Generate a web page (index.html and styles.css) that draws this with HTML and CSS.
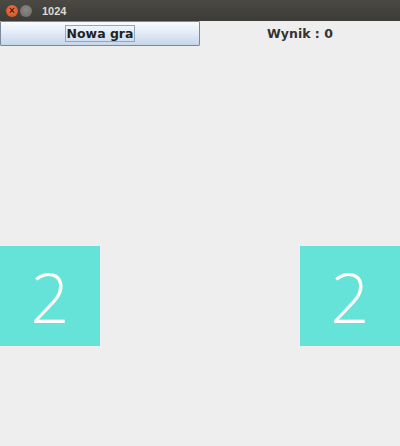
FILE: index.html
```html
<!DOCTYPE html>
<html>
<head>
<meta charset="utf-8">
<link rel="stylesheet" href="styles.css">
</head>
<body>
<div class="window">
  <div class="titlebar">
    <span class="wbtn close">×</span>
    <span class="wbtn min"></span>
    <span class="title">1024</span>
  </div>
  <div class="toolbar">
    <button class="newgame"><span class="label">Nowa gra</span></button>
    <div class="score">Wynik : 0</div>
  </div>
  <div class="board">
    <div class="cell"></div><div class="cell"></div><div class="cell"></div><div class="cell"></div>
    <div class="cell"></div><div class="cell"></div><div class="cell"></div><div class="cell"></div>
    <div class="cell tile">2</div><div class="cell"></div><div class="cell"></div><div class="cell tile">2</div>
    <div class="cell"></div><div class="cell"></div><div class="cell"></div><div class="cell"></div>
  </div>
</div>
</body>
</html>
```
FILE: styles.css
```css
html, body { margin: 0; padding: 0; background: #eeeeee; }
.window { width: 400px; height: 446px; display: flex; flex-direction: column; overflow: hidden; }
.titlebar {
  height: 21px; flex: none;
  background: linear-gradient(#4a4944, #3c3b37);
  display: flex; align-items: center; padding-left: 6px; gap: 2px;
  font-family: "Liberation Sans", sans-serif;
}
.wbtn {
  width: 12px; height: 12px; border-radius: 50%;
  display: inline-flex; align-items: center; justify-content: center;
  font-size: 10px; line-height: 1; color: #4a1a0a; font-weight: bold;
}
.close { background: radial-gradient(circle at 50% 40%, #f27546, #d44a1b); }
.min { background: radial-gradient(circle at 50% 40%, #8a8985, #6a6965); }
.title { color: #dfdbd2; font-size: 11px; font-weight: bold; margin-left: 8px; }
.toolbar { height: 25px; flex: none; display: flex; }
.newgame {
  width: 200px; height: 25px; margin: 0; padding: 0;
  border: 1px solid #7a8a9c; border-radius: 1px;
  background: linear-gradient(#fbfcfe, #e6eef8 40%, #c6d6ea);
  display: flex; align-items: center; justify-content: center;
  font-family: "DejaVu Sans", sans-serif; font-size: 12.5px; font-weight: bold; color: #222;
}
.label { border: 1px solid #93a6ba; padding: 0 1px; line-height: 15px; }
.score {
  width: 200px; display: flex; align-items: center; justify-content: center;
  font-family: "DejaVu Sans", sans-serif; font-size: 12.5px; font-weight: bold; color: #333;
}
.board { display: grid; grid-template-columns: repeat(4, 100px); grid-template-rows: repeat(4, 100px); }
.cell { width: 100px; height: 100px; }
.tile {
  background: #66e3d8; color: #ffffff;
  display: flex; align-items: center; justify-content: center;
  font-family: "Open Sans", sans-serif; font-weight: 300; font-size: 68px;
}
```
